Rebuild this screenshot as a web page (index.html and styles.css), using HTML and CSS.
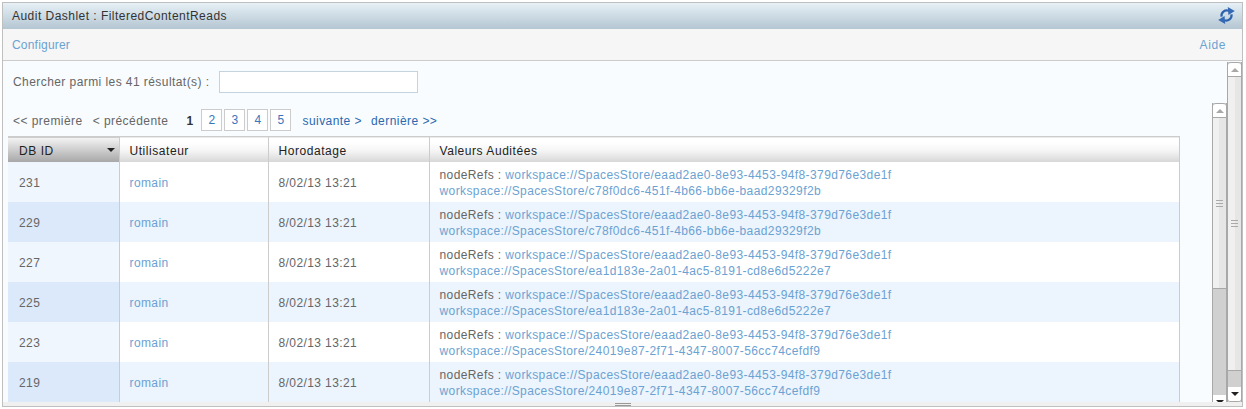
FILE: index.html
```html
<!DOCTYPE html>
<html lang="fr">
<head>
    <meta charset="UTF-8">
    <title>Audit Dashlet</title>
    <link rel="stylesheet" href="styles.css">
</head>
<body>
    <div class="dashlet">
        <div class="title-bar">
            <span>Audit Dashlet : FilteredContentReads</span>
            <svg class="refresh" width="17" height="17" viewBox="0 0 16 16">
                <g id="refresh-arrow">
                    <path d="M3.3 9 A5 5 0 0 1 10 3.6" fill="none" stroke="#2f62ad" stroke-width="2.1"/>
                    <path d="M9.2 0 L15.8 3.8 L9.8 7.6 Z" fill="#3568b5"/>
                </g>
                <use href="#refresh-arrow" transform="rotate(180 8 8)"/>
            </svg>
        </div>
        <div class="toolbar">
            <a href="#">Configurer</a>
            <a class="help" href="#">Aide</a>
        </div>
        <div class="dashlet-body">
            <div class="main">
                <div class="search">
                    <label for="search-box">Chercher parmi les 41 résultat(s) :</label>
                    <input type="text" id="search-box">
                </div>
                <div class="results">
                    <div class="results-list">
                        <div class="pager">
                            <span>&lt;&lt; première</span>
                            <span>&lt; précédente</span>
                            <div class="pages">
                                <b>1</b>
                                <a class="page" href="#">2</a>
                                <a class="page" href="#">3</a>
                                <a class="page" href="#">4</a>
                                <a class="page" href="#">5</a>
                            </div>
                            <a class="nav" href="#">suivante &gt;</a>
                            <a class="nav" href="#">dernière &gt;&gt;</a>
                        </div>
                        <table>
                            <thead>
                                <tr>
                                    <th class="col-id sorted">DB ID<i class="sort-arrow"></i></th>
                                    <th class="col-user">Utilisateur</th>
                                    <th class="col-date">Horodatage</th>
                                    <th>Valeurs Auditées</th>
                                </tr>
                            </thead>
                            <tbody>
                                <tr>
                                    <td class="col-id">231</td>
                                    <td><a href="#">romain</a></td>
                                    <td>8/02/13 13:21</td>
                                    <td>nodeRefs : <a href="#">workspace://SpacesStore/eaad2ae0-8e93-4453-94f8-379d76e3de1f</a><br><a href="#">workspace://SpacesStore/c78f0dc6-451f-4b66-bb6e-baad29329f2b</a></td>
                                </tr>
                                <tr>
                                    <td class="col-id">229</td>
                                    <td><a href="#">romain</a></td>
                                    <td>8/02/13 13:21</td>
                                    <td>nodeRefs : <a href="#">workspace://SpacesStore/eaad2ae0-8e93-4453-94f8-379d76e3de1f</a><br><a href="#">workspace://SpacesStore/c78f0dc6-451f-4b66-bb6e-baad29329f2b</a></td>
                                </tr>
                                <tr>
                                    <td class="col-id">227</td>
                                    <td><a href="#">romain</a></td>
                                    <td>8/02/13 13:21</td>
                                    <td>nodeRefs : <a href="#">workspace://SpacesStore/eaad2ae0-8e93-4453-94f8-379d76e3de1f</a><br><a href="#">workspace://SpacesStore/ea1d183e-2a01-4ac5-8191-cd8e6d5222e7</a></td>
                                </tr>
                                <tr>
                                    <td class="col-id">225</td>
                                    <td><a href="#">romain</a></td>
                                    <td>8/02/13 13:21</td>
                                    <td>nodeRefs : <a href="#">workspace://SpacesStore/eaad2ae0-8e93-4453-94f8-379d76e3de1f</a><br><a href="#">workspace://SpacesStore/ea1d183e-2a01-4ac5-8191-cd8e6d5222e7</a></td>
                                </tr>
                                <tr>
                                    <td class="col-id">223</td>
                                    <td><a href="#">romain</a></td>
                                    <td>8/02/13 13:21</td>
                                    <td>nodeRefs : <a href="#">workspace://SpacesStore/eaad2ae0-8e93-4453-94f8-379d76e3de1f</a><br><a href="#">workspace://SpacesStore/24019e87-2f71-4347-8007-56cc74cefdf9</a></td>
                                </tr>
                                <tr>
                                    <td class="col-id">219</td>
                                    <td><a href="#">romain</a></td>
                                    <td>8/02/13 13:21</td>
                                    <td>nodeRefs : <a href="#">workspace://SpacesStore/eaad2ae0-8e93-4453-94f8-379d76e3de1f</a><br><a href="#">workspace://SpacesStore/24019e87-2f71-4347-8007-56cc74cefdf9</a></td>
                                </tr>
                            </tbody>
                        </table>
                    </div>
                    <div class="scrollbar inner-bar">
                        <div class="scroll-btn up"></div>
                        <div class="thumb inner-thumb"><span class="grip"></span></div>
                        <div class="track"></div>
                        <div class="scroll-btn down"></div>
                    </div>
                </div>
            </div>
            <div class="scrollbar outer-bar">
                <div class="scroll-btn up"></div>
                <div class="thumb outer-thumb"><span class="grip"></span></div>
                <div class="track"></div>
                <div class="scroll-btn down"></div>
            </div>
        </div>
        <div class="resize-handle"><span></span></div>
    </div>
</body>
</html>
```

FILE: styles.css
```css
html, body {
    height: 100%;
}

body {
    margin: 0;
    padding: 2px 3px 2px 2px;
    box-sizing: border-box;
    background-color: #ffffff;
    font-family: 'Liberation Sans', Arial, sans-serif;
    font-size: 12px;
    letter-spacing: 0.4px;
    color: #666666;
    overflow: hidden;
}

a {
    color: #6ba2d2;
    text-decoration: none;
}

.dashlet {
    height: 405px;
    box-sizing: border-box;
    border: 1px solid #bfbfbf;
    display: flex;
    flex-direction: column;
    overflow: hidden;
}

.title-bar {
    height: 26px;
    flex: none;
    box-sizing: border-box;
    padding: 0 7px 0 9px;
    display: flex;
    align-items: center;
    justify-content: space-between;
    background: linear-gradient(#e6f0f5, #b4c6d3);
    color: #333333;
    letter-spacing: 0.47px;
}

.refresh {
    margin-top: -2px;
}

.toolbar {
    height: 32px;
    flex: none;
    box-sizing: border-box;
    padding: 0 16px 0 9px;
    display: flex;
    align-items: center;
    justify-content: space-between;
    background-color: #f6f6f6;
    border-bottom: 1px solid #cccccc;
    letter-spacing: 0.2px;
}

.toolbar .help {
    letter-spacing: 0.6px;
}

.dashlet-body {
    flex: 1;
    min-height: 0;
    display: flex;
    background-color: #f8fcfe;
    overflow: hidden;
}

.main {
    flex: 1;
    min-width: 0;
    display: flex;
    flex-direction: column;
}

.search {
    height: 42px;
    flex: none;
    padding: 10px 0 0 10px;
    box-sizing: border-box;
    display: flex;
    align-items: flex-start;
    gap: 10px;
    letter-spacing: 0.43px;
}

.search label {
    line-height: 22px;
}

.search input {
    width: 199px;
    height: 22px;
    box-sizing: border-box;
    margin: 0;
    padding: 0;
    border: 1px solid #c5d3de;
    background-color: #ffffff;
}

.results {
    flex: 1;
    min-height: 0;
    display: flex;
}

.results-list {
    flex: 1;
    min-width: 0;
    padding-left: 5px;
    padding-right: 31px;
}

.pager {
    height: 33px;
    box-sizing: border-box;
    padding: 6px 0 0 5px;
    display: flex;
    align-items: flex-start;
    line-height: 24px;
    letter-spacing: 0.45px;
}

.pager > span {
    margin-right: 10px;
}

.pages {
    margin-left: 8px;
    margin-right: 11px;
    display: flex;
    gap: 2px;
}

.pages b {
    color: #333333;
    margin-right: 4px;
    width: 9px;
}

.page {
    width: 21px;
    height: 22px;
    box-sizing: border-box;
    border: 1px solid #cccccc;
    background-color: #ffffff;
    color: #3a76bb;
    text-align: center;
    line-height: 20px;
}

.nav {
    color: #2a69b0;
    margin-right: 9px;
}

table {
    width: 1172px;
    table-layout: fixed;
    border-collapse: collapse;
    border-top: 1px solid #cccccc;
    border-right: 1px solid #cccccc;
}

th {
    height: 25px;
    padding: 3px 0 0 10px;
    box-sizing: border-box;
    text-align: left;
    font-weight: normal;
    color: #222222;
    letter-spacing: 0.55px;
    background: linear-gradient(#ffffff 20%, #f4f4f4 55%, #d6d6d6);
    border-right: 1px solid #cccccc;
}

th.sorted {
    background: linear-gradient(#f4f4f4, #a6a6a6);
    position: relative;
    padding-left: 11px;
}

.sort-arrow {
    position: absolute;
    right: 4px;
    top: 11px;
    border-left: 4px solid transparent;
    border-right: 4px solid transparent;
    border-top: 4px solid #222222;
}

.col-id {
    width: 111px;
}

.col-user {
    width: 149px;
}

.col-date {
    width: 161px;
}

td {
    height: 40px;
    padding: 2px 0 0 10px;
    box-sizing: border-box;
    line-height: 16px;
    background-color: #ffffff;
    border-right: 1px solid #cccccc;
}

tbody tr:nth-child(even) td {
    background-color: #ecf4fd;
}

td.col-id {
    background-color: #f0f6fe;
    padding-left: 11px;
}

tbody tr:nth-child(even) td.col-id {
    background-color: #dce9fb;
}

.scrollbar {
    width: 15px;
    flex: none;
    box-sizing: border-box;
    display: flex;
    flex-direction: column;
    background-color: #d0d0d0;
    border-left: 1px solid #a8a8a8;
    border-right: 1px solid #a8a8a8;
}

.outer-bar {
    margin-top: 1px;
}

.inner-bar {
    height: 307px;
}

.scroll-btn {
    height: 15px;
    flex: none;
    box-sizing: border-box;
    background-color: #ffffff;
    position: relative;
}

.scroll-btn.up {
    border-top: 1px solid #a8a8a8;
    border-bottom: 1px solid #a8a8a8;
    border-radius: 3px 3px 0 0;
}

.scroll-btn.down {
    border-bottom: 1px solid #a8a8a8;
    border-radius: 0 0 3px 3px;
}

.scroll-btn::after {
    content: "";
    position: absolute;
    left: 3px;
    top: 5px;
    border-left: 4px solid transparent;
    border-right: 4px solid transparent;
}

.scroll-btn.up::after {
    border-bottom: 4px solid #a8a8a8;
}

.scroll-btn.down::after {
    border-top: 4px solid #222222;
}

.thumb {
    flex: none;
    box-sizing: border-box;
    display: flex;
    align-items: center;
    justify-content: center;
    background: linear-gradient(90deg, #f0f0f0 50%, #e6e6e6 50%);
    border-bottom: 1px solid #a8a8a8;
}

.outer-thumb {
    height: 294px;
}

.inner-thumb {
    height: 171px;
}

.grip {
    width: 7px;
    height: 5px;
    border-top: 1px solid #aaaaaa;
    border-bottom: 1px solid #aaaaaa;
    background: linear-gradient(#aaaaaa, #aaaaaa) center / 100% 1px no-repeat;
}

.track {
    flex: 1;
}

.resize-handle {
    height: 4px;
    flex: none;
    display: flex;
    justify-content: center;
    align-items: center;
    background-color: #f0f0f0;
}

.resize-handle span {
    width: 16px;
    height: 1px;
    border-top: 1px solid #999999;
    border-bottom: 1px solid #999999;
}
```
